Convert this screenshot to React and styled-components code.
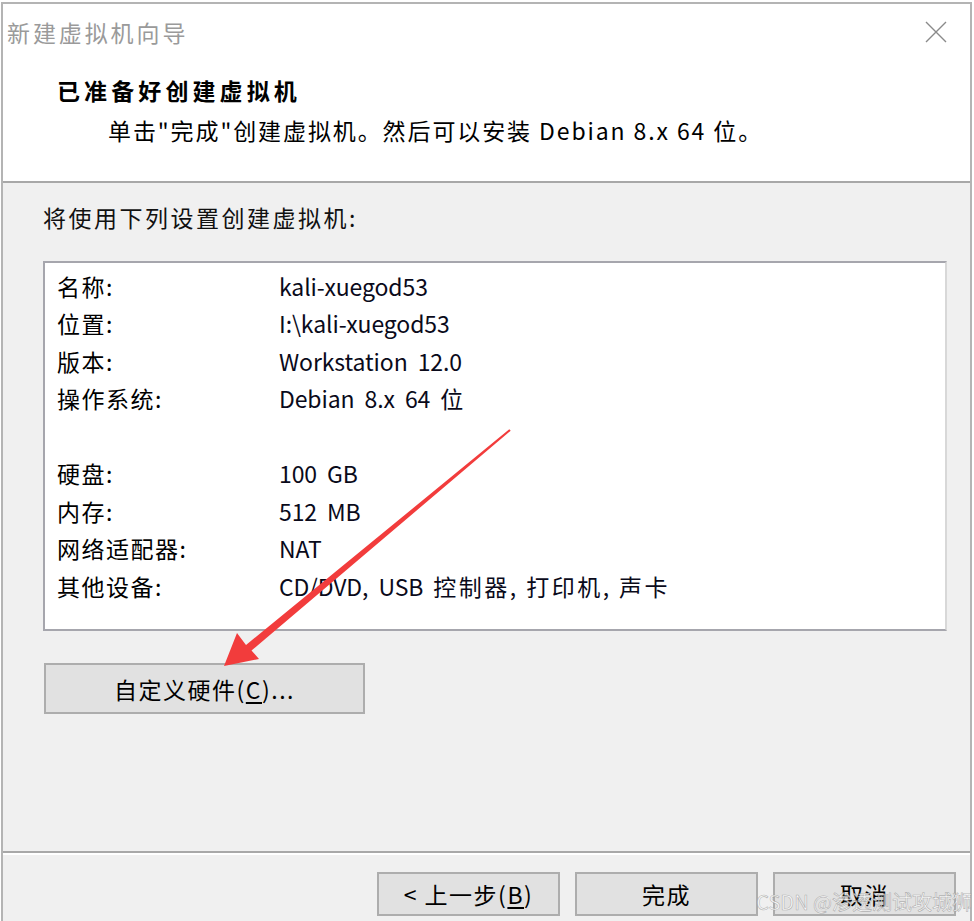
import React from 'react';
import styled, { createGlobalStyle } from 'styled-components';

const FONT = '"Noto Sans CJK SC", "Noto Sans", sans-serif';

const GlobalStyle = createGlobalStyle`
  html, body {
    margin: 0;
    padding: 0;
    background: #ffffff;
  }
  body {
    font-family: ${FONT};
    color: #000;
  }
`;

const summary = [
  ['名称:', 'kali-xuegod53'],
  ['位置:', 'I:\\kali-xuegod53'],
  ['版本:', 'Workstation 12.0'],
  ['操作系统:', 'Debian 8.x 64 位'],
  null,
  ['硬盘:', '100 GB'],
  ['内存:', '512 MB'],
  ['网络适配器:', 'NAT'],
  ['其他设备:', 'CD/DVD, USB 控制器, 打印机, 声卡'],
];

// wider spacing for the chinese runs inside a value
function ValueText({ text }) {
  return text
    .split(/([\u4e00-\u9fff]+)/)
    .map((part, i) => (/[\u4e00-\u9fff]/.test(part) ? <Cjk key={i}>{part}</Cjk> : part));
}

function CloseIcon() {
  return (
    <svg width="24" height="24" viewBox="0 0 24 24">
      <path d="M2 2 L22 22 M22 2 L2 22" stroke="#8a8a8a" strokeWidth="1.4" fill="none" />
    </svg>
  );
}

function RedArrow() {
  return (
    <ArrowLayer width="974" height="921" viewBox="0 0 974 921">
      <polygon
        points="510.7,430.7 251.5,650.5 259,659 224,666 237,633 246,645 509.3,429.3"
        fill="#f23c3c"
      />
    </ArrowLayer>
  );
}

function App() {
  return (
    <Page>
      <GlobalStyle />
      <Window>
        <Header>
          <TitleBar>
            <TitleText>新建虚拟机向导</TitleText>
            <CloseButton>
              <CloseIcon />
            </CloseButton>
          </TitleBar>
          <Heading>已准备好创建虚拟机</Heading>
          <SubHeading>单击"完成"创建虚拟机。然后可以安装 Debian 8.x 64 位。</SubHeading>
        </Header>
        <Body>
          <Intro>将使用下列设置创建虚拟机:</Intro>
          <ListBox>
            {summary.map((row, i) =>
              row ? (
                <Row key={i}>
                  <Label>{row[0]}</Label>
                  <Value>
                    <ValueText text={row[1]} />
                  </Value>
                </Row>
              ) : (
                <Row key={i} />
              )
            )}
          </ListBox>
          <CustomButton>
            自定义硬件(<u>C</u>)...
          </CustomButton>
        </Body>
        <Footer>
          <FooterButton>
            &lt; 上一步(<u>B</u>)
          </FooterButton>
          <FooterButton>完成</FooterButton>
          <FooterButton>取消</FooterButton>
        </Footer>
      </Window>
      <RedArrow />
      <Watermark>CSDN @渗透测试攻城狮</Watermark>
    </Page>
  );
}

const Page = styled.div`
  position: relative;
  width: 974px;
  height: 921px;
  overflow: hidden;
  padding-top: 2px;
  box-sizing: border-box;
`;

const Window = styled.div`
  margin-left: 1px;
  width: 971px;
  height: 919px;
  box-sizing: border-box;
  border: 2px solid #b4b4b4;
  border-bottom: none;
  display: flex;
  flex-direction: column;
  background: #f0f0f0;
`;

const Header = styled.div`
  background: #ffffff;
  height: 177px;
  flex-shrink: 0;
  border-bottom: 2px solid #a8a8a8;
  display: flex;
  flex-direction: column;
`;

const TitleBar = styled.div`
  height: 56px;
  display: flex;
  align-items: center;
  justify-content: space-between;
  padding: 0 22px 0 4px;
`;

const TitleText = styled.span`
  font-size: 23px;
  letter-spacing: 2.9px;
  color: #9a9a9a;
`;

const CloseButton = styled.span`
  display: flex;
  align-items: center;
`;

const Heading = styled.div`
  margin-top: 14px;
  padding-left: 54px;
  font-size: 23px;
  font-weight: 700;
  letter-spacing: 4.1px;
  line-height: 32px;
`;

const SubHeading = styled.div`
  margin-top: 8px;
  padding-left: 105px;
  font-size: 23px;
  letter-spacing: 1.9px;
  line-height: 32px;
`;

const Body = styled.div`
  flex: 1;
  display: flex;
  flex-direction: column;
  align-items: flex-start;
  padding: 0 23px 0 40px;
  border-bottom: 2px solid #a8a8a8;
  box-shadow: 0 2px 0 #ffffff;
`;

const Intro = styled.div`
  margin-top: 18px;
  font-size: 23px;
  letter-spacing: 2.5px;
  line-height: 32px;
  color: #111;
`;

const ListBox = styled.div`
  margin-top: 28px;
  align-self: stretch;
  height: 370px;
  box-sizing: border-box;
  background: #ffffff;
  border: 2px solid #a6a6ad;
  border-right-color: #d8d8d8;
  padding: 4px 12px;
`;

const Row = styled.div`
  display: flex;
  height: 37.5px;
  align-items: center;
  font-size: 23px;
`;

const Label = styled.span`
  width: 222px;
  letter-spacing: 1.5px;
`;

const Value = styled.span`
  color: #0a0a1a;
  letter-spacing: -0.1px;
  word-spacing: 5px;
`;

const Cjk = styled.span`
  letter-spacing: 2.5px;
`;

const CustomButton = styled.div`
  margin-top: 32px;
  margin-left: 1px;
  width: 321px;
  height: 51px;
  box-sizing: border-box;
  background: #e1e1e1;
  border: 2px solid #adadad;
  display: flex;
  align-items: center;
  justify-content: center;
  font-size: 23px;
  letter-spacing: 1.5px;

  u {
    text-underline-offset: 3px;
  }
`;

const Footer = styled.div`
  height: 49px;
  flex-shrink: 0;
  display: flex;
  justify-content: flex-end;
  align-items: flex-start;
  gap: 15px;
  padding: 19px 14px 0 0;
`;

const FooterButton = styled.div`
  width: 183px;
  height: 44px;
  box-sizing: border-box;
  background: #e1e1e1;
  border: 2px solid #adadad;
  display: flex;
  align-items: center;
  justify-content: center;
  font-size: 23px;
  letter-spacing: 1.5px;

  u {
    text-underline-offset: 3px;
  }
`;

const ArrowLayer = styled.svg`
  position: absolute;
  left: 0;
  top: 0;
  pointer-events: none;
`;

const Watermark = styled.div`
  position: absolute;
  right: 2px;
  bottom: 5px;
  font-size: 20px;
  font-family: ${FONT};
  color: rgba(255, 255, 255, 0.75);
  -webkit-text-stroke: 0.6px rgba(120, 120, 120, 0.55);
  letter-spacing: 0px;
  pointer-events: none;
`;

export default App;
